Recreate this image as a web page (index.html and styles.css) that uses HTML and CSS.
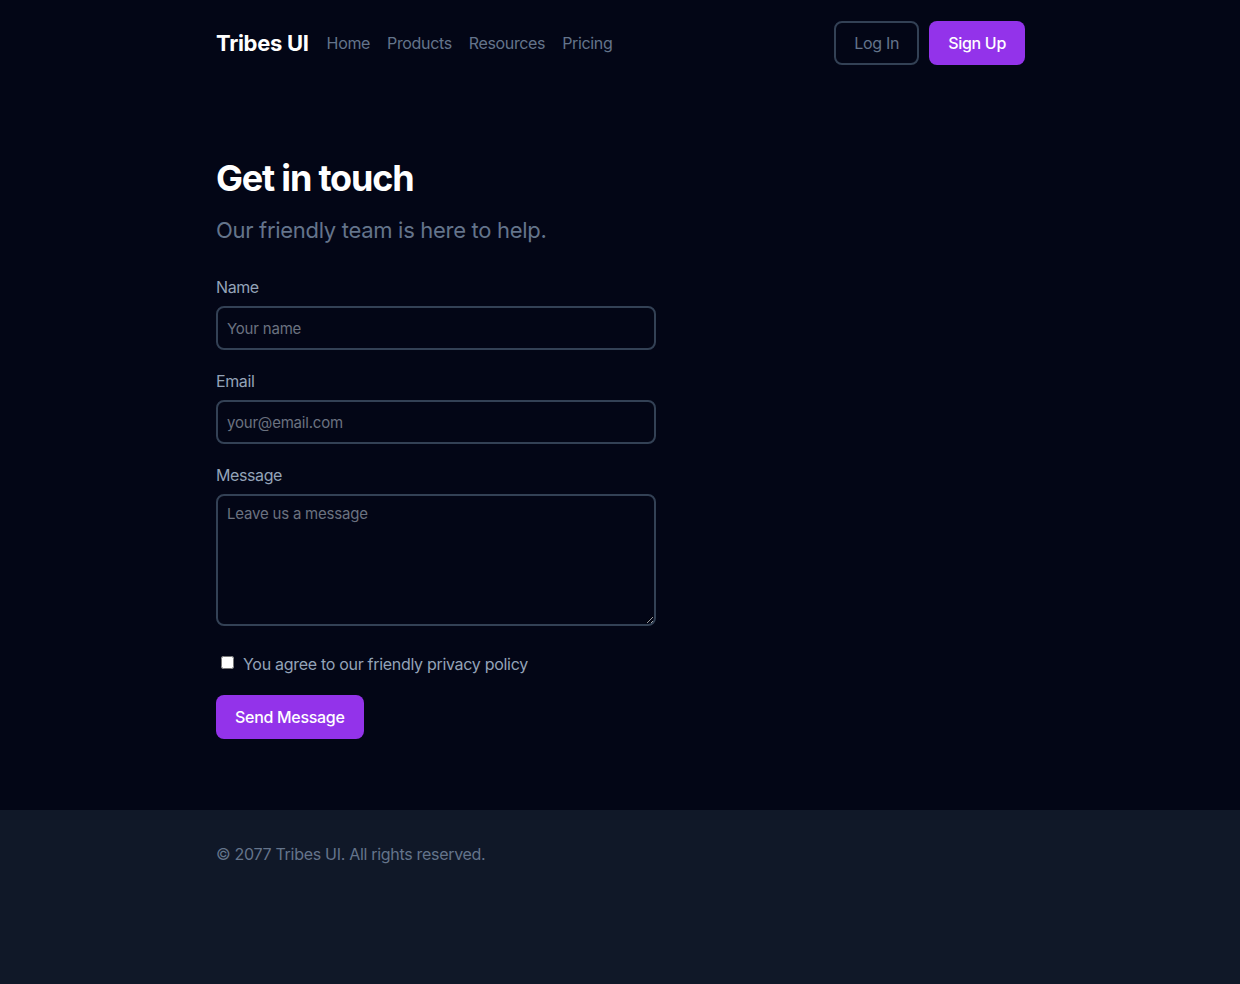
FILE: index.html
```html
<!DOCTYPE html>
<html lang="en">
<head>
<meta charset="utf-8">
<title>Tribes UI – Contact</title>
<link rel="stylesheet" href="styles.css">
</head>
<body>
<div class="page">
  <header class="header">
    <div class="container header-inner">
      <div class="left">
        <a class="brand" href="#">Tribes UI</a>
        <nav class="nav">
          <a href="#">Home</a>
          <a href="#">Products</a>
          <a href="#">Resources</a>
          <a href="#">Pricing</a>
        </nav>
      </div>
      <div class="actions">
        <a class="btn btn-outline" href="#">Log In</a>
        <a class="btn btn-primary" href="#">Sign Up</a>
      </div>
    </div>
  </header>
  <main class="main">
    <div class="container">
      <h1 class="title">Get in touch</h1>
      <p class="subtitle">Our friendly team is here to help.</p>
      <form class="form">
        <div class="field">
          <label class="label" for="name">Name</label>
          <input class="input" id="name" type="text" placeholder="Your name">
        </div>
        <div class="field">
          <label class="label" for="email">Email</label>
          <input class="input" id="email" type="email" placeholder="your@email.com">
        </div>
        <div class="field">
          <label class="label" for="msg">Message</label>
          <textarea class="input textarea" id="msg" placeholder="Leave us a message"></textarea>
        </div>
        <label class="check">
          <input type="checkbox" class="checkbox">
          <span>You agree to our friendly privacy policy</span>
        </label>
        <button type="button" class="btn btn-primary send">Send Message</button>
      </form>
    </div>
  </main>
  <footer class="footer">
    <div class="container">
      <p class="copy">© 2077 Tribes UI. All rights reserved.</p>
    </div>
  </footer>
</div>
</body>
</html>
```

FILE: styles.css
```css
* { box-sizing: border-box; }
html, body { margin: 0; padding: 0; }
body {
  background: #030616;
  font-family: Inter, "Noto Sans", "Liberation Sans", sans-serif;
  color: #e5e7eb;
  letter-spacing: -0.3px;
}
a { text-decoration: none; }
.page {
  min-height: 100vh;
  display: flex;
  flex-direction: column;
}
.container {
  width: 808px;
  margin: 0 auto;
}
.header { padding: 21px 0 20px; }
.header-inner {
  display: flex;
  align-items: center;
  justify-content: space-between;
}
.left {
  display: flex;
  align-items: center;
  gap: 18px;
}
.brand {
  color: #ffffff;
  font-weight: 700;
  font-size: 22px;
  letter-spacing: -0.3px;
}
.nav {
  display: flex;
  gap: 17px;
}
.nav a {
  color: #64748b;
  font-size: 16px;
  line-height: 24px;
  letter-spacing: -0.35px;
}
.actions {
  display: flex;
  gap: 10px;
  margin-right: -1px;
}
.btn {
  display: inline-flex;
  align-items: center;
  justify-content: center;
  height: 44px;
  border-radius: 8px;
  font-family: inherit;
  font-size: 16px;
  font-weight: 500;
  letter-spacing: -0.3px;
  white-space: nowrap;
}
.btn-outline {
  border: 2px solid #334155;
  color: #64748b;
  font-weight: 400;
  padding: 0 18px;
}
.btn-primary {
  background: #9333ea;
  color: #ffffff;
  border: none;
  padding: 0 19px;
}
.main {
  padding: 73px 0 71px;
}
.title {
  margin: 0;
  font-size: 36px;
  line-height: 40px;
  font-weight: 700;
  color: #ffffff;
  letter-spacing: -1.2px;
}
.subtitle {
  margin: 18px 0 0;
  font-size: 22px;
  line-height: 28px;
  color: #64748b;
  letter-spacing: -0.3px;
}
.form {
  margin-top: 31px;
  width: 440px;
}
.field {
  display: flex;
  flex-direction: column;
  margin-bottom: 19px;
}
.label {
  font-size: 16px;
  line-height: 24px;
  color: #94a3b8;
  margin-bottom: 7px;
  letter-spacing: -0.4px;
}
.input {
  height: 44px;
  width: 440px;
  background: transparent;
  border: 2px solid #334155;
  border-radius: 8px;
  padding: 0 9px;
  font-family: inherit;
  font-size: 15px;
  letter-spacing: -0.2px;
  color: #e5e7eb;
  outline: none;
}
.input::placeholder { color: #6b7280; }
.textarea {
  height: 132px;
  padding: 8px 9px;
  resize: vertical;
  line-height: 20px;
}
.check {
  display: flex;
  align-items: center;
  gap: 9px;
  margin-top: 26px;
  font-size: 16px;
  line-height: 24px;
  color: #94a3b8;
}
.checkbox {
  margin: -4px 0 0 5px;
  width: 13px;
  height: 13px;
}
.send {
  margin-top: 19px;
  padding: 0 19px;
  cursor: pointer;
}
.footer {
  flex: 1;
  background: #101828;
  padding: 32px 0;
}
.copy {
  margin: 0;
  font-size: 16px;
  line-height: 24px;
  color: #64748b;
}
```
